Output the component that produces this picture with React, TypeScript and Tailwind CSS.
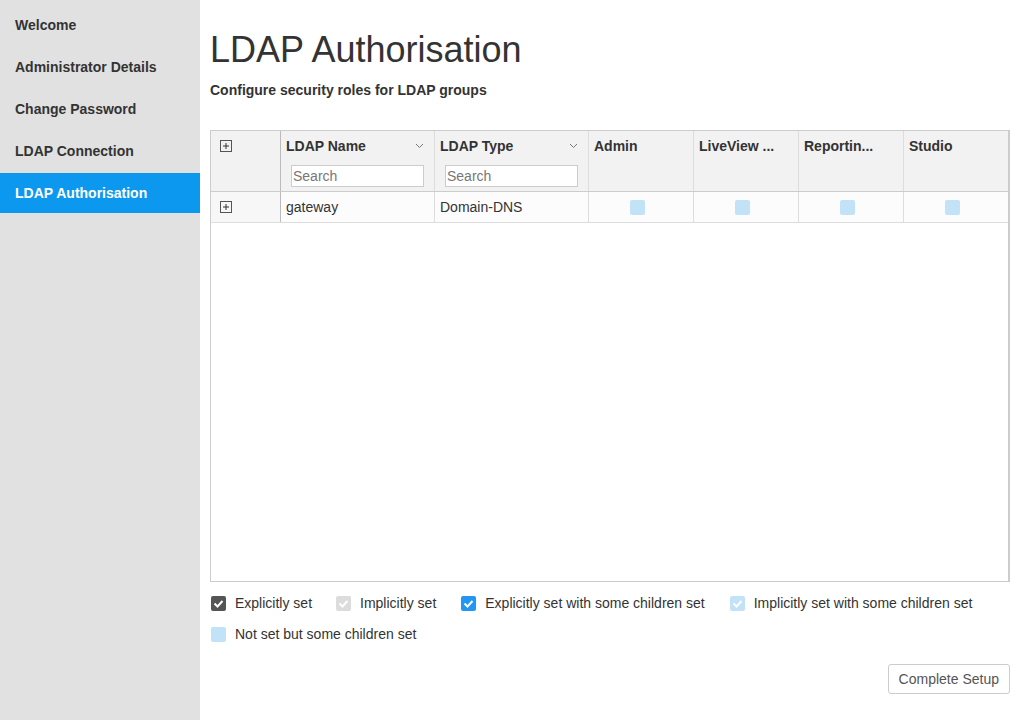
import React from 'react';

const navItems = ['Welcome', 'Administrator Details', 'Change Password', 'LDAP Connection', 'LDAP Authorisation'];
const roles = ['Admin', 'LiveView ...', 'Reportin...', 'Studio'];

function PlusBox() {
  return (
    <svg width="12" height="12" viewBox="0 0 12 12" className="block">
      <rect x="0.5" y="0.5" width="11" height="11" fill="none" stroke="#555" />
      <path d="M3 6h6M6 3v6" stroke="#333" strokeWidth="1" />
    </svg>
  );
}

function Chevron() {
  return (
    <svg width="9" height="6" viewBox="0 0 9 6" className="block">
      <path d="M1 1l3.5 3.5L8 1" fill="none" stroke="#777" strokeWidth="1" />
    </svg>
  );
}

function Box({ bg, check }: { bg: string; check?: boolean }) {
  return (
    <span className={`flex h-[15px] w-[15px] items-center justify-center rounded-[2px] ${bg}`}>
      {check && (
        <svg width="11" height="9" viewBox="0 0 11 9">
          <path d="M1.5 4.5l3 3 5-5.5" fill="none" stroke="#fff" strokeWidth="2" />
        </svg>
      )}
    </span>
  );
}

export default function App() {
  return (
    <div className="flex min-h-[720px] font-['Liberation_Sans',Arial,sans-serif] text-[#333]">
      <nav className="w-[200px] shrink-0 bg-[#e1e1e1] pt-[5px]">
        {navItems.map((item, i) => (
          <div
            key={item}
            className={`mb-[2px] flex h-10 items-center pl-[15px] text-sm font-bold ${
              i === navItems.length - 1 ? 'bg-[#0d98ef] text-white' : 'text-[#333]'
            }`}
          >
            {item}
          </div>
        ))}
      </nav>

      <main className="flex-1 px-[10px] pt-[30px]">
        <h1 className="text-[36px] leading-[40px] text-[#333]">LDAP Authorisation</h1>
        <p className="mt-[10px] text-sm leading-5 font-bold">Configure security roles for LDAP groups</p>

        <div className="mt-[30px] h-[452px] border border-r-2 border-[#ccc] text-sm">
          <div className="grid h-[61px] grid-cols-[70px_154px_154px_105px_105px_105px_1fr] border-b border-[#ccc] bg-[#f2f2f2]">
            <div className="border-r border-[#bbb] pl-[9px] pt-[9px]">
              <PlusBox />
            </div>
            {['LDAP Name', 'LDAP Type'].map((h) => (
              <div key={h} className="border-r border-[#ddd] px-[5px] pt-[5px]">
                <div className="flex items-center justify-between pr-[5px] leading-5 font-bold">
                  <span>{h}</span>
                  <Chevron />
                </div>
                <div className="mt-[9px] ml-[5px] h-[22px] w-[133px] border border-[#ccc] bg-white px-[1px] text-sm leading-5 text-[#777]">
                  Search
                </div>
              </div>
            ))}
            {roles.map((r, i) => (
              <div
                key={r}
                className={`px-[5px] pt-[5px] leading-5 font-bold whitespace-nowrap ${i < 3 ? 'border-r border-[#ddd]' : ''}`}
              >
                {r}
              </div>
            ))}
          </div>

          <div className="grid h-[31px] grid-cols-[70px_154px_154px_105px_105px_105px_1fr] border-b border-[#ddd] bg-[#fcfcfc]">
            <div className="flex items-center border-r border-[#bbb] bg-[#f7f7f7] pl-[9px]">
              <PlusBox />
            </div>
            <div className="flex items-center border-r border-[#ddd] px-[5px]">gateway</div>
            <div className="flex items-center border-r border-[#ddd] px-[5px]">Domain-DNS</div>
            {roles.map((r, i) => (
              <div key={r} className={`flex items-center justify-center pr-[7px] ${i < 3 ? 'border-r border-[#ddd]' : ''}`}>
                <Box bg="bg-[#c2e2f8]" />
              </div>
            ))}
          </div>
        </div>

        <div className="mt-[13px] flex flex-wrap items-center gap-y-[14px] pl-[1px] text-sm leading-[17px]">
          <span className="mr-[24px] flex items-center gap-[9px]">
            <Box bg="bg-[#555]" check />
            Explicitly set
          </span>
          <span className="mr-[25px] flex items-center gap-[9px]">
            <Box bg="bg-[#dcdcdc]" check />
            Implicitly set
          </span>
          <span className="mr-[25px] flex items-center gap-[9px]">
            <Box bg="bg-[#2196f3]" check />
            Explicitly set with some children set
          </span>
          <span className="flex items-center gap-[9px]">
            <Box bg="bg-[#c2e2f8]" check />
            Implicitly set with some children set
          </span>
          <span className="flex w-full items-center gap-[9px]">
            <Box bg="bg-[#c2e2f8]" />
            Not set but some children set
          </span>
        </div>

        <div className="mt-[21px] flex justify-end">
          <button className="h-[30px] rounded-[3px] border border-[#ccc] bg-white px-[10px] text-sm text-[#555]">
            Complete Setup
          </button>
        </div>
      </main>
    </div>
  );
}
